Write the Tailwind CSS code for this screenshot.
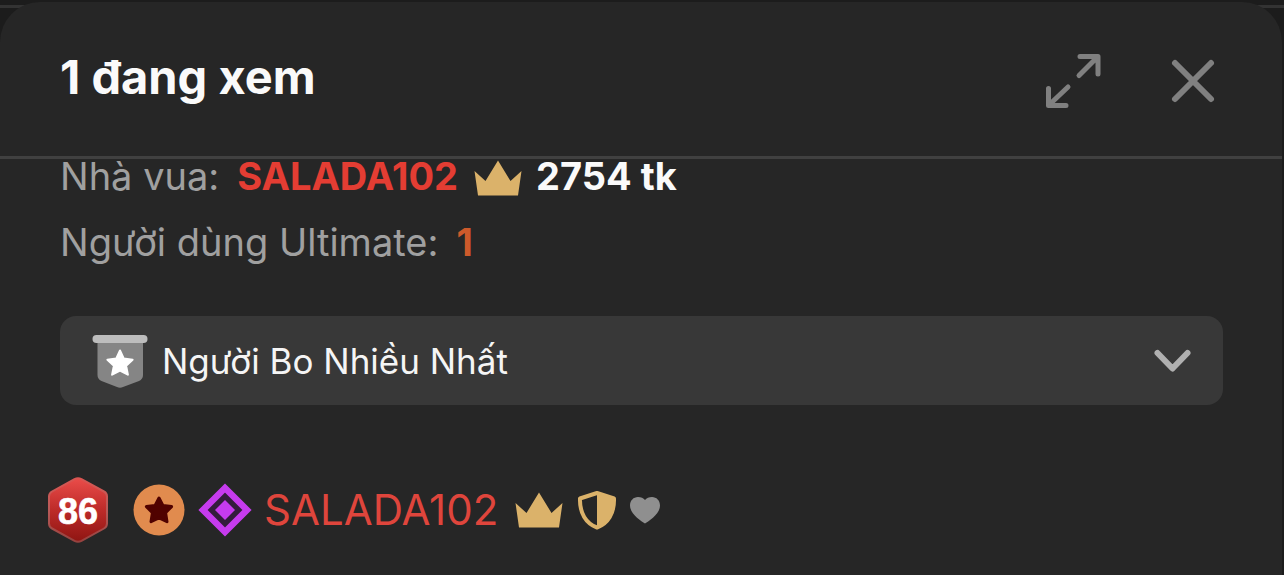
<!DOCTYPE html>
<html lang="vi">
<head>
<meta charset="utf-8">
<meta name="viewport" content="width=device-width, initial-scale=1">
<title>1 đang xem</title>
<script src="https://cdn.jsdelivr.net/npm/@tailwindcss/browser@4"></script>
</head>
<body class="min-h-screen bg-[#1c1c1c] font-['Inter','Noto_Sans',sans-serif] text-[#a0a0a0]">
<svg class="hidden" aria-hidden="true">
  <symbol id="crown" viewBox="0 0 48 36"><path d="M4 35.500 0.500 11 11.500 21 24 0.500 36.500 21 47.500 11 44 35.500Z" fill="#dbb26a"/></symbol>
</svg>
<div class="flex min-h-screen flex-col bg-[linear-gradient(#333,#333)] bg-[length:100%_3px] bg-[position:0_5px] bg-no-repeat pt-[2px] pr-[2px]">
  <main class="flex grow flex-col rounded-t-[40px] bg-[#262626]">
    <header class="flex h-[157px] items-center border-b-3 border-[#404040] pr-[66px] pl-[60px]">
      <h1 class="grow pb-1 text-[47px] leading-[56px] font-bold text-[#fafafa]">1 đang xem</h1>
      <button type="button" aria-label="Mở rộng" class="mt-1 mr-[68px]">
        <svg class="h-[58px] w-[58px]" viewBox="0 0 58 58" fill="none" stroke="#808080" stroke-width="5" stroke-linecap="round" stroke-linejoin="round">
          <path d="M36 4.500H54V22M53 5.500 35 23.500M4.500 36.500V53.500H22M5.500 52.500 24 35"/>
        </svg>
      </button>
      <button type="button" aria-label="Đóng" class="mt-1">
        <svg class="h-[46px] w-[46px]" viewBox="0 0 46 46" fill="none" stroke="#808080" stroke-width="6" stroke-linecap="round">
          <path d="M5 5 41 41M41 5 5 41"/>
        </svg>
      </button>
    </header>

    <section class="flex flex-col gap-[30px] px-[60px]">
      <p class="flex h-9 items-center pb-[2px] text-[38px] leading-9">Nhà vua:
        <strong class="ml-[18px] font-bold text-[#e43d33]">SALADA102</strong>
        <svg class="mt-1 ml-4 h-9 w-12" role="img" aria-label="Nhà vua"><use href="#crown"/></svg>
        <strong class="ml-[14px] font-bold text-[#fafafa]">2754 tk</strong>
      </p>
      <p class="flex h-9 items-center pb-[2px] text-[38px] leading-9">Người dùng Ultimate:
        <strong class="ml-[18px] font-bold text-[#cd5a2b]">1</strong>
      </p>
    </section>

    <div class="relative mt-[55px] mr-[59px] ml-[60px]">
      <select aria-label="Bảng xếp hạng" class="block h-[89px] w-full appearance-none rounded-2xl bg-[#383838] pt-[2px] pr-20 pl-[102px] text-[35px] text-[#f5f5f5]">
        <option>Người Bo Nhiều Nhất</option>
      </select>
      <svg class="pointer-events-none absolute top-[18px] left-8 h-[54px] w-14" viewBox="0 0 56 54" aria-hidden="true">
        <path d="M5.500 5H51V41Q51 45 47 47L31 53Q28 54.500 25 53L9.500 47Q5.500 45 5.500 41Z" fill="#858585"/>
        <rect x="0.500" y="1" width="55" height="8" rx="4" fill="#bdbdbd"/>
        <path d="M28 16.500 31.800 24.600 40.600 25.700 34.100 31.800 35.900 40.700 28 36.500 20.100 40.700 21.900 31.800 15.400 25.700 24.200 24.600Z" fill="#fff" stroke="#fff" stroke-width="2" stroke-linejoin="round"/>
      </svg>
      <svg class="pointer-events-none absolute top-[33px] right-8 h-6 w-[38px]" viewBox="0 0 38 24" fill="none" stroke="#b0b0b0" stroke-width="6" stroke-linecap="round" stroke-linejoin="round" aria-hidden="true"><path d="M4.500 4 19.500 19.500 34.500 4"/></svg>
    </div>

    <ul class="mt-[71px] pr-12 pl-[47px]">
      <li class="flex h-[68px] items-center">
        <svg class="h-[68px] w-[62px]" viewBox="0 0 62 68" role="img" aria-label="Cấp 86">
          <defs>
            <linearGradient id="gem" x1="0" y1="0" x2="0" y2="1"><stop offset="0" stop-color="#ea4c49"/><stop offset=".5" stop-color="#bd2b29"/><stop offset="1" stop-color="#8f1512"/></linearGradient>
            <linearGradient id="rim" x1="0" y1="0" x2="0" y2="1"><stop offset="0" stop-color="#d95551"/><stop offset=".5" stop-color="#b85a58"/><stop offset="1" stop-color="#96423f"/></linearGradient>
          </defs>
          <path d="M27.500 3.200Q31 1.500 34.500 3.200L57 15.500Q60 17.200 60 20.500V47.500Q60 50.800 57 52.500L34.500 64.800Q31 66.500 27.500 64.800L5 52.500Q2 50.800 2 47.500V20.500Q2 17.200 5 15.500Z" fill="url(#gem)" stroke="url(#rim)" stroke-width="2"/>
          <text x="31" y="48" text-anchor="middle" font-family="Liberation Sans, Arial, sans-serif" font-size="36" font-weight="700" fill="#fff" stroke="#fff" stroke-width="0.600">86</text>
        </svg>
        <svg class="ml-6 h-[52px] w-[52px]" viewBox="0 0 52 52" aria-hidden="true">
          <circle cx="26" cy="26" r="25.500" fill="#e18b4e"/>
          <path d="M26 14 29.900 21.500 38.600 22.600 32.600 28.700 34 37.700 26 34 18 37.700 19.400 28.700 13.400 22.600 22.100 21.500Z" fill="#500200" stroke="#500200" stroke-width="3" stroke-linejoin="round"/>
        </svg>
        <svg class="ml-[13px] h-[54px] w-[54px]" viewBox="0 0 54 54" aria-hidden="true">
          <path d="M27 5 49 27 27 49 5 27Z" fill="#331c3c" stroke="#c63bee" stroke-width="6.500"/>
          <path d="M27 17 37 27 27 37 17 27Z" fill="#c63bee"/>
        </svg>
        <a href="#" class="ml-3 text-[42px] leading-[48px] text-[#df453c]">SALADA102</a>
        <svg class="ml-[17px] h-9 w-12" aria-hidden="true"><use href="#crown"/></svg>
        <svg class="ml-[14px] h-10 w-10" viewBox="0 0 40 40" aria-hidden="true">
          <path d="M20 3 37 8.500C37.500 23 31 33.500 20 37.500 9 33.500 2.500 23 3 8.500Z" fill="#262626" stroke="#dbb26a" stroke-width="4" stroke-linejoin="round"/>
          <path d="M20 3 37 8.500C37.500 23 31 33.500 20 37.500Z" fill="#dbb26a"/>
        </svg>
        <svg class="ml-3 h-7 w-8" viewBox="0 0 32 28" aria-hidden="true"><path d="M16 27.500C12 25 1 18 1 9.500 1 4.500 4.500 1 9 1 12 1 14.500 2 16 4 17.500 2 20 1 23 1 27.500 1 31 4.500 31 9.500 31 18 20 25 16 27.500Z" fill="#8f8f8f"/></svg>
      </li>
    </ul>
  </main>
</div>
</body>
</html>
